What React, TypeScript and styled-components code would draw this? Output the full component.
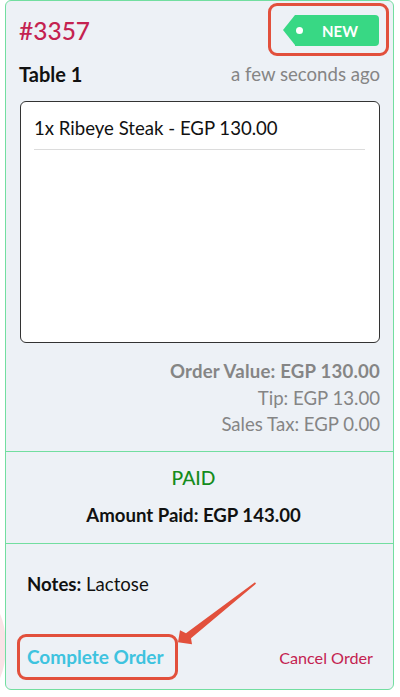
import styled, { createGlobalStyle } from 'styled-components';

const GlobalStyle = createGlobalStyle`
  html, body {
    margin: 0;
    padding: 0;
    background: #fff;
  }

  body {
    font-family: Lato, 'Open Sans', sans-serif;
    width: 400px;
    height: 697px;
    overflow: hidden;
  }
`;

const COLORS = {
  CARD_BG: '#edf1f6',
  CARD_BORDER: '#72dea0',
  CRIMSON: '#c42250',
  GREEN_TAG: '#38d884',
  PAID: '#158c1c',
  GREY: '#858585',
  CYAN: '#3ec3df',
  ANNOTATION: '#e2503c',
};

const Page = styled.div`
  position: relative;
  width: 400px;
  height: 697px;
`;

const Backdrop = styled.div`
  position: absolute;
  left: -40px;
  top: 598px;
  width: 46px;
  height: 96px;
  border-radius: 50%;
  background: #f9e3e6;
`;

const Card = styled.div`
  position: relative;
  margin-left: 5px;
  width: 389px;
  height: 690px;
  box-sizing: border-box;
  border: 1px solid ${COLORS.CARD_BORDER};
  border-radius: 6px;
  background: ${COLORS.CARD_BG};
  display: flex;
  flex-direction: column;
  font-size: 18.6px;
`;

const Top = styled.div`
  padding: 2px 13px 0 13px;
  display: flex;
  flex-direction: column;
`;

const HeaderRow = styled.div`
  display: flex;
  align-items: center;
  justify-content: space-between;
  height: 53px;
`;

const OrderNumber = styled.span`
  color: ${COLORS.CRIMSON};
  font-size: 24.5px;
  font-weight: 500;
  margin-top: 2px;
`;

const TagFrame = styled.div`
  margin-right: -9px;
  padding: 9px 7px 7px 12px;
  border: 3px solid ${COLORS.ANNOTATION};
  border-radius: 9px;
  display: flex;
`;

const Tag = styled.div`
  position: relative;
  height: 31px;
  width: 84px;
  margin-left: 12px;
  background: ${COLORS.GREEN_TAG};
  border-radius: 0 4px 4px 0;
  color: #fff;
  font-size: 15px;
  font-weight: 700;
  display: flex;
  align-items: center;
  justify-content: flex-end;
  padding-right: 21px;
  box-sizing: border-box;

  &::before {
    content: '';
    position: absolute;
    left: -12px;
    top: 0;
    border-style: solid;
    border-width: 15.5px 12px 15.5px 0;
    border-color: transparent ${COLORS.GREEN_TAG} transparent transparent;
  }

  &::after {
    content: '';
    position: absolute;
    left: 1px;
    top: 12px;
    width: 7px;
    height: 7px;
    border-radius: 50%;
    background: #fff;
  }
`;

const InfoRow = styled.div`
  display: flex;
  align-items: center;
  justify-content: space-between;
  margin-top: 5px;
  height: 26px;
`;

const TableName = styled.span`
  font-weight: 700;
  font-size: 20px;
  color: #111;
`;

const TimeAgo = styled.span`
  color: ${COLORS.GREY};
`;

const ItemsBox = styled.div`
  margin: 14px 0 0 1px;
  height: 242px;
  box-sizing: border-box;
  background: #fff;
  border: 1px solid #333;
  border-radius: 6px;
  padding: 15px 14px 0 13px;
`;

const ItemLine = styled.div`
  color: #111;
  line-height: 22px;
  padding-bottom: 10px;
  border-bottom: 1px solid #dcdcdc;
`;

const Totals = styled.div`
  margin-top: 15px;
  display: flex;
  flex-direction: column;
  align-items: flex-end;
  padding-bottom: 13px;
`;

const TotalLine = styled.div<{ $bold?: boolean }>`
  color: ${COLORS.GREY};
  line-height: 26.5px;
  font-weight: ${({ $bold }) => ($bold ? 700 : 400)};
  letter-spacing: ${({ $bold }) => ($bold ? '0.2px' : '0')};
`;

const Section = styled.div`
  border-top: 1px solid ${COLORS.CARD_BORDER};
  display: flex;
  flex-direction: column;
  align-items: center;
  padding: 13px 0 15px;
`;

const PaidLabel = styled.div`
  color: ${COLORS.PAID};
  font-size: 19.3px;
  font-weight: 500;
  line-height: 26px;
  margin-left: -12px;
`;

const AmountPaid = styled.div`
  margin-top: 11px;
  margin-left: -12px;
  font-weight: 700;
  color: #111;
  line-height: 26px;
`;

const Footer = styled.div`
  position: relative;
  flex: 1;
  border-top: 1px solid ${COLORS.CARD_BORDER};
  display: flex;
  flex-direction: column;
  justify-content: space-between;
  padding: 27px 20px 9px 11px;
`;

const Notes = styled.div`
  color: #111;
  line-height: 26px;
  padding-left: 10px;

  b {
    font-weight: 700;
  }
`;

const Actions = styled.div`
  display: flex;
  align-items: center;
  justify-content: space-between;
`;

const CompleteFrame = styled.div`
  border: 3px solid ${COLORS.ANNOTATION};
  border-radius: 9px;
  padding: 8px 11px 8px 7px;
  display: flex;
`;

const CompleteButton = styled.button`
  background: none;
  border: none;
  padding: 0;
  font-family: inherit;
  font-size: 19px;
  line-height: 24px;
  font-weight: 700;
  color: ${COLORS.CYAN};
  cursor: pointer;
`;

const CancelButton = styled.button`
  background: none;
  border: none;
  padding: 0;
  font-family: inherit;
  font-size: 16.2px;
  color: ${COLORS.CRIMSON};
  cursor: pointer;
`;

const Arrow = styled.svg`
  position: absolute;
  left: 0;
  top: 0;
  width: 100%;
  height: 100%;
  pointer-events: none;
`;

function App() {
  return (
    <Page>
      <GlobalStyle />
      <Backdrop />
      <Card>
        <Top>
          <HeaderRow>
            <OrderNumber>#3357</OrderNumber>
            <TagFrame>
              <Tag>NEW</Tag>
            </TagFrame>
          </HeaderRow>
          <InfoRow>
            <TableName>Table 1</TableName>
            <TimeAgo>a few seconds ago</TimeAgo>
          </InfoRow>
          <ItemsBox>
            <ItemLine>1x Ribeye Steak - EGP 130.00</ItemLine>
          </ItemsBox>
          <Totals>
            <TotalLine $bold>Order Value: EGP 130.00</TotalLine>
            <TotalLine>Tip: EGP 13.00</TotalLine>
            <TotalLine>Sales Tax: EGP 0.00</TotalLine>
          </Totals>
        </Top>
        <Section>
          <PaidLabel>PAID</PaidLabel>
          <AmountPaid>Amount Paid: EGP 143.00</AmountPaid>
        </Section>
        <Footer>
          <Notes>
            <b>Notes:</b> Lactose
          </Notes>
          <Actions>
            <CompleteFrame>
              <CompleteButton>Complete Order</CompleteButton>
            </CompleteFrame>
            <CancelButton>Cancel Order</CancelButton>
          </Actions>
          <Arrow viewBox="0 0 387 145" preserveAspectRatio="none">
            <polygon
              fill={COLORS.ANNOTATION}
              points="249,38 250,39.5 185,94 186,100 172,98 174,86 180,89"
            />
          </Arrow>
        </Footer>
      </Card>
    </Page>
  );
}

export default App;
